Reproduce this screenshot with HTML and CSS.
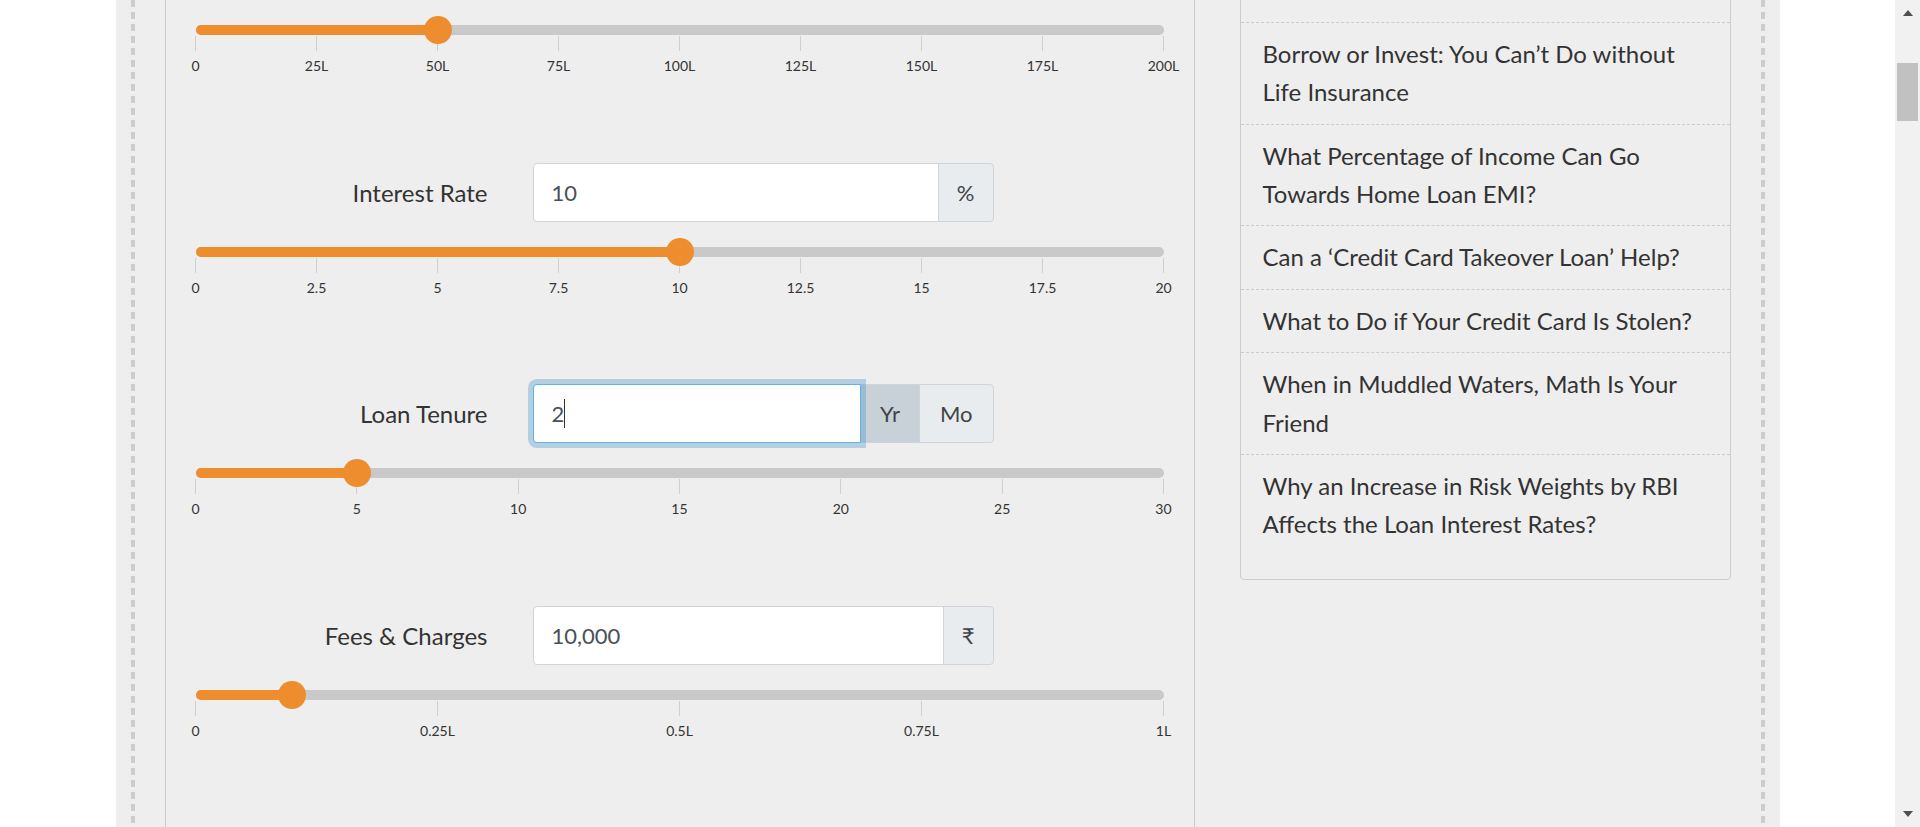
FILE: index.html
```html
<!DOCTYPE html>
<html lang="en">
<head>
<meta charset="utf-8">
<title>EMI Calculator</title>
<link rel="stylesheet" href="styles.css">
</head>
<body>
<div class="viewport">
  <div class="page">
    <div class="wrap">
      <div class="inner">
        <main class="calc">
          <section class="field">
            <div class="field-head">
              <label class="field-label">Loan Amount</label>
              <div class="input-group">
                <input class="form-input" type="text" value="50,00,000">
                <span class="addon addon-last">₹</span>
              </div>
            </div>
            <div class="slider">
              <div class="track"><div class="fill" style="width:25%"><span class="thumb"></span></div></div>
              <div class="scale scale-9">
                <div class="mark"><i></i><span>0</span></div>
                <div class="mark"><i></i><span>25L</span></div>
                <div class="mark"><i></i><span>50L</span></div>
                <div class="mark"><i></i><span>75L</span></div>
                <div class="mark"><i></i><span>100L</span></div>
                <div class="mark"><i></i><span>125L</span></div>
                <div class="mark"><i></i><span>150L</span></div>
                <div class="mark"><i></i><span>175L</span></div>
                <div class="mark"><i></i><span>200L</span></div>
              </div>
            </div>
          </section>

          <section class="field">
            <div class="field-head">
              <label class="field-label">Interest Rate</label>
              <div class="input-group">
                <input class="form-input" type="text" value="10">
                <span class="addon addon-last">%</span>
              </div>
            </div>
            <div class="slider">
              <div class="track"><div class="fill" style="width:50%"><span class="thumb"></span></div></div>
              <div class="scale scale-9">
                <div class="mark"><i></i><span>0</span></div>
                <div class="mark"><i></i><span>2.5</span></div>
                <div class="mark"><i></i><span>5</span></div>
                <div class="mark"><i></i><span>7.5</span></div>
                <div class="mark"><i></i><span>10</span></div>
                <div class="mark"><i></i><span>12.5</span></div>
                <div class="mark"><i></i><span>15</span></div>
                <div class="mark"><i></i><span>17.5</span></div>
                <div class="mark"><i></i><span>20</span></div>
              </div>
            </div>
          </section>

          <section class="field">
            <div class="field-head">
              <label class="field-label">Loan Tenure</label>
              <div class="input-group">
                <input class="form-input is-focused" type="text" value="2">
                <span class="caret"></span>
                <span class="addon addon-active">Yr</span>
                <span class="addon addon-wide addon-last">Mo</span>
              </div>
            </div>
            <div class="slider">
              <div class="track"><div class="fill" style="width:16.667%"><span class="thumb"></span></div></div>
              <div class="scale scale-7">
                <div class="mark"><i></i><span>0</span></div>
                <div class="mark"><i></i><span>5</span></div>
                <div class="mark"><i></i><span>10</span></div>
                <div class="mark"><i></i><span>15</span></div>
                <div class="mark"><i></i><span>20</span></div>
                <div class="mark"><i></i><span>25</span></div>
                <div class="mark"><i></i><span>30</span></div>
              </div>
            </div>
          </section>

          <section class="field">
            <div class="field-head">
              <label class="field-label">Fees &amp; Charges</label>
              <div class="input-group">
                <input class="form-input" type="text" value="10,000">
                <span class="addon addon-last">₹</span>
              </div>
            </div>
            <div class="slider">
              <div class="track"><div class="fill" style="width:10%"><span class="thumb"></span></div></div>
              <div class="scale scale-5">
                <div class="mark"><i></i><span>0</span></div>
                <div class="mark"><i></i><span>0.25L</span></div>
                <div class="mark"><i></i><span>0.5L</span></div>
                <div class="mark"><i></i><span>0.75L</span></div>
                <div class="mark"><i></i><span>1L</span></div>
              </div>
            </div>
          </section>
        </main>

        <aside class="sidebar">
          <div class="side-box">
            <h3 class="side-title">Related Articles</h3>
            <ul class="side-list">
              <li><a href="#">How Is Your CIBIL Score Calculated?</a></li>
              <li><a href="#">Borrow or Invest: You Can’t Do without Life Insurance</a></li>
              <li><a href="#">What Percentage of Income Can Go Towards Home Loan EMI?</a></li>
              <li><a href="#">Can a ‘Credit Card Takeover Loan’ Help?</a></li>
              <li><a href="#">What to Do if Your Credit Card Is Stolen?</a></li>
              <li><a href="#">When in Muddled Waters, Math Is Your Friend</a></li>
              <li><a href="#">Why an Increase in Risk Weights by RBI Affects the Loan Interest Rates?</a></li>
            </ul>
          </div>
        </aside>
      </div>
    </div>
  </div>
  <div class="scrollbar">
    <div class="sb-btn"><span class="arrow-up"></span></div>
    <div class="sb-thumb"></div>
    <div class="sb-space"></div>
    <div class="sb-btn"><span class="arrow-down"></span></div>
  </div>
</div>
</body>
</html>
```

FILE: styles.css
```css
* { box-sizing: border-box; }

html, body {
  margin: 0;
  height: 100%;
}

body {
  font-family: "Lato", "Noto Sans", sans-serif;
  color: #333;
  background: #fff;
}

.viewport {
  display: flex;
  height: 100vh;
  overflow: hidden;
}

.page {
  flex: 1;
  min-width: 0;
  overflow: hidden;
  background: #fff;
}

.wrap {
  width: 1664px;
  margin: -121px auto 0;
  padding: 0 15px;
  background: #eeeeee;
}

.inner {
  display: flex;
  align-items: flex-start;
  gap: 45px;
  padding: 0 34px;
  background:
    repeating-linear-gradient(to bottom, #cdcdcd 0 7px, transparent 7px 12px) left 0 top 1px / 4px 100% no-repeat,
    repeating-linear-gradient(to bottom, #cdcdcd 0 7px, transparent 7px 12px) right 0 top 1px / 4px 100% no-repeat;
}

/* ---------- calculator panel ---------- */
.calc {
  width: 1030px;
  flex: none;
  border-left: 1px solid #cacaca;
  border-right: 1px solid #cacaca;
  padding: 62px 30px 80px;
}

.field {
  height: 221.5px;
}

.field-head {
  display: grid;
  grid-template-columns: 292px 461px;
  column-gap: 45px;
  align-items: center;
  height: 59px;
}

.field-label {
  text-align: right;
  font-size: 24px;
  color: #333;
}

.input-group {
  position: relative;
  display: flex;
  height: 59px;
}

.form-input {
  flex: 1;
  min-width: 0;
  height: 59px;
  margin: 0;
  padding: 0 18px;
  border: 1px solid #ced4da;
  border-radius: 4px 0 0 4px;
  background: #fff;
  font-family: "Lato", "Noto Sans", sans-serif;
  font-size: 22px;
  color: #495057;
  outline: none;
}

.form-input.is-focused {
  position: relative;
  z-index: 2;
  border-color: #5db4e9;
  box-shadow: 0 0 0 5px rgba(70, 150, 200, 0.35);
}

.caret {
  position: absolute;
  z-index: 3;
  left: 31px;
  top: 15px;
  width: 1px;
  height: 29px;
  background: #333;
}

.addon {
  display: flex;
  align-items: center;
  padding: 0 18px;
  margin-left: -1px;
  border: 1px solid #ced4da;
  background: #e9ecef;
  font-size: 22px;
  color: #3f4448;
}

.addon-last {
  border-radius: 0 4px 4px 0;
}

.addon-active {
  background: #c8d0d8;
  padding: 0 19px;
}

.addon-wide {
  padding: 0 20px;
}

/* ---------- sliders ---------- */
.slider {
  margin-top: 25px;
}

.track {
  height: 10px;
  border-radius: 5px;
  background: #c9c9c9;
}

.fill {
  position: relative;
  height: 10px;
  border-radius: 5px 0 0 5px;
  background: #ee8d2d;
}

.thumb {
  position: absolute;
  right: -14px;
  top: -9px;
  width: 28px;
  height: 28px;
  border-radius: 50%;
  background: #ee8d2d;
}

.scale {
  display: grid;
  margin-top: 1px;
}

.scale-9 {
  grid-template-columns: repeat(9, 1fr);
  margin-left: -6.25%;
  margin-right: -6.25%;
}

.scale-7 {
  grid-template-columns: repeat(7, 1fr);
  margin-left: -8.3333%;
  margin-right: -8.3333%;
}

.scale-5 {
  grid-template-columns: repeat(5, 1fr);
  margin-left: -12.5%;
  margin-right: -12.5%;
}

.mark {
  display: flex;
  flex-direction: column;
  align-items: center;
}

.mark i {
  display: block;
  width: 1px;
  height: 15px;
  background: #cfcfcf;
}

.mark span {
  margin-top: 6px;
  font-size: 14px;
  line-height: 17px;
  color: #333;
}

/* ---------- sidebar ---------- */
.sidebar {
  width: 491px;
  flex: none;
}

.side-box {
  border: 1px solid #cccccc;
  border-radius: 4px;
  padding: 0 0 23px;
}

.side-title {
  margin: 0;
  padding: 20px 23px;
  font-size: 24px;
  line-height: 38.4px;
  font-weight: 700;
  color: #333;
}

.side-list {
  list-style: none;
  margin: 0;
  padding: 0;
}

.side-list li {
  border-top: 1px dashed #cccccc;
  padding: 12px 23px 12px 22px;
  font-size: 24px;
  line-height: 38.4px;
}

.side-list a {
  color: #333;
  text-decoration: none;
}

/* ---------- scrollbar ---------- */
.scrollbar {
  width: 25px;
  flex: none;
  display: flex;
  flex-direction: column;
  background: #f1f1f1;
  padding: 0 2px;
}

.sb-btn {
  height: 26px;
  display: flex;
  align-items: center;
  justify-content: center;
}

.arrow-up {
  width: 0;
  height: 0;
  border-left: 5.5px solid transparent;
  border-right: 5.5px solid transparent;
  border-bottom: 6px solid #505050;
}

.arrow-down {
  width: 0;
  height: 0;
  border-left: 5.5px solid transparent;
  border-right: 5.5px solid transparent;
  border-top: 6px solid #505050;
}

.sb-thumb {
  margin-top: 37px;
  height: 58px;
  background: #c1c1c1;
}

.sb-space {
  flex: 1;
}
```
